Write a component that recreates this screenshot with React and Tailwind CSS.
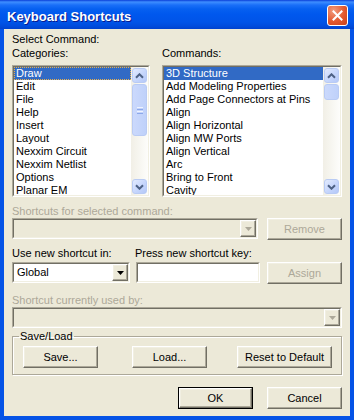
const raised =
  "border border-t-white border-l-white border-r-[#716F64] border-b-[#716F64] shadow-[inset_-1px_-1px_#ACA899,inset_1px_1px_#F1EFE2] bg-[#ECE9D8]";

const categories = ["Draw", "Edit", "File", "Help", "Insert", "Layout", "Nexxim Circuit", "Nexxim Netlist", "Options", "Planar EM"];
const commands = [
  "3D Structure",
  "Add Modeling Properties",
  "Add Page Connectors at Pins",
  "Align",
  "Align Horizontal",
  "Align MW Ports",
  "Align Vertical",
  "Arc",
  "Bring to Front",
  "Cavity",
];

function Sunken({ className = "", inner = "", children }) {
  return (
    <div className={`border border-t-[#ACA899] border-l-[#ACA899] border-r-white border-b-white ${className}`}>
      <div className={`h-full border border-t-[#716F64] border-l-[#716F64] border-r-[#F1EFE2] border-b-[#F1EFE2] ${inner}`}>
        {children}
      </div>
    </div>
  );
}

function Chevron({ down }) {
  return (
    <svg width="9" height="6" viewBox="0 0 9 6">
      <path
        d={down ? "M1 1.2 L4.5 4.7 L8 1.2" : "M1 4.8 L4.5 1.3 L8 4.8"}
        fill="none"
        stroke="#4D6185"
        strokeWidth="2"
      />
    </svg>
  );
}

function ScrollBtn({ down }) {
  return (
    <div className="h-[17px] w-[17px] p-px">
      <div className="flex h-full items-center justify-center rounded-[3px] border border-[#B9CBF4] bg-[linear-gradient(135deg,#E3EBFE,#C6D6FC_55%,#B4C8F8)]">
        <Chevron down={down} />
      </div>
    </div>
  );
}

function Scrollbar({ big }) {
  return (
    <div className="flex w-[17px] shrink-0 flex-col bg-[linear-gradient(to_right,#F1EFE6,#FDFDFB)]">
      <ScrollBtn />
      <div className={`px-px ${big ? "h-[52px]" : "h-[16px]"}`}>
        <div className="flex h-full flex-col items-center justify-center gap-px rounded-[3px] border border-[#B9CBF4] bg-[linear-gradient(to_right,#CBD9FC,#BFD1FA)]">
          {big && (
            <>
              <div className="h-px w-[6px] bg-[#EEF3FE]" />
              <div className="h-px w-[6px] bg-[#8CA8EA]" />
              <div className="h-px w-[6px] bg-[#EEF3FE]" />
              <div className="h-px w-[6px] bg-[#8CA8EA]" />
            </>
          )}
        </div>
      </div>
      <div className="flex-1" />
      <ScrollBtn down />
    </div>
  );
}

function ListBox({ items, focused, big, className }) {
  return (
    <Sunken className={`h-[132px] ${className}`} inner="flex bg-white overflow-hidden">
      <div className="min-w-0 flex-1 overflow-hidden">
        {items.map((it, i) => (
          <div
            key={it}
            className={`h-[13px] whitespace-nowrap pl-[2px] leading-[13px] ${
              i === 0 ? "bg-[#316AC5] text-white" : ""
            } ${i === 0 && focused ? "outline-1 -outline-offset-1 outline-dotted outline-[#E6B04E]" : ""}`}
          >
            {it}
          </div>
        ))}
      </div>
      <Scrollbar big={big} />
    </Sunken>
  );
}

function DropArrow({ disabled }) {
  return (
    <svg width="7" height="4" viewBox="0 0 7 4">
      <path d="M0 0 H7 L3.5 4 Z" fill={disabled ? "#ACA899" : "#000"} />
    </svg>
  );
}

function Combo({ className, value, disabled }) {
  return (
    <Sunken className={`h-[21px] ${className}`} inner={`flex ${disabled ? "bg-[#ECE9D8]" : "bg-white"}`}>
      <div className="flex-1 pl-[3px] leading-[17px]">{value}</div>
      <div className={`flex w-4 items-center justify-center ${raised}`}>
        <DropArrow disabled={disabled} />
      </div>
    </Sunken>
  );
}

function Button({ children, className = "", disabled, isDefault }) {
  const inner = (
    <div className={`flex h-full items-center justify-center ${raised} ${disabled ? "text-[#ACA899]" : ""}`}>
      {children}
    </div>
  );
  if (isDefault) return <div className={`h-[22px] border border-black ${className}`}>{inner}</div>;
  return <div className={`h-[22px] ${className}`}>{inner}</div>;
}

function TitleBar() {
  return (
    <div className="flex h-[29px] shrink-0 items-start justify-between bg-[linear-gradient(to_bottom,#0A3FD8_0px,#3E8EFF_2px,#1A6FF8_5px,#0660F0_9px,#0058EE_14px,#0054E8_22px,#004CDD_26px,#0042CE_29px)] pl-[7px]">
      <div className="mt-[9px] text-[13px] font-bold leading-[15px] text-white [text-shadow:1px_1px_#0A1A8C]">
        Keyboard Shortcuts
      </div>
      <div className="mr-[6px] mt-[5px] flex h-[21px] w-[21px] items-center justify-center rounded-[3px] border border-white bg-[radial-gradient(circle_at_30%_25%,#F29C7E,#E2582F_55%,#C8401A)]">
        <svg width="11" height="11" viewBox="0 0 11 11">
          <path d="M1.5 1.5 L9.5 9.5 M9.5 1.5 L1.5 9.5" stroke="white" strokeWidth="2" strokeLinecap="square" />
        </svg>
      </div>
    </div>
  );
}

export default function App() {
  return (
    <div className="flex h-[420px] w-[354px] flex-col font-['Liberation_Sans',Arial,sans-serif] text-[11px] leading-[13px] text-black">
      <TitleBar />
      <div className="flex flex-1 flex-col border-x-4 border-b-4 border-[#0553E6] bg-[#ECE9D8] px-2 pt-1">
        <div className="h-[13px]">Select Command:</div>
        <div className="mt-px flex h-[13px]">
          <div className="w-[150px]">Categories:</div>
          <div>Commands:</div>
        </div>
        <div className="mt-[5px] flex gap-3">
          <ListBox items={categories} focused big className="w-[138px]" />
          <ListBox items={commands} className="w-[180px]" />
        </div>

        <div className="mt-2 h-[13px] text-[#ACA899]">Shortcuts for selected command:</div>
        <div className="flex gap-[9px]">
          <Combo className="w-[246px]" disabled />
          <Button className="w-[75px]" disabled>
            Remove
          </Button>
        </div>

        <div className="mt-[7px] flex h-[13px]">
          <div className="w-[123px]">Use new shortcut in:</div>
          <div>Press new shortcut key:</div>
        </div>
        <div className="mt-[2px] flex">
          <Combo className="w-[118px]" value="Global" />
          <Sunken className="ml-[6px] h-[21px] w-[124px]" inner="bg-white" />
          <Button className="ml-[7px] w-[75px]" disabled>
            Assign
          </Button>
        </div>

        <div className="mt-[10px] h-[13px] text-[#ACA899]">Shortcut currently used by:</div>
        <Combo className="w-[330px]" disabled />

        <fieldset className="mt-[2px] border border-[#ACA899] pb-[6px] shadow-[inset_1px_1px_white,1px_1px_white]">
          <legend className="ml-[6px] px-px leading-[13px]">Save/Load</legend>
          <div className="mt-[3px] flex pl-[10px]">
            <Button className="w-[75px]">Save...</Button>
            <Button className="ml-[34px] w-[75px]">Load...</Button>
            <Button className="ml-[30px] w-[95px]">Reset to Default</Button>
          </div>
        </fieldset>

        <div className="mt-3 flex justify-end gap-[14px]">
          <Button className="w-[75px]" isDefault>
            OK
          </Button>
          <Button className="w-[75px]">Cancel</Button>
        </div>
      </div>
    </div>
  );
}
